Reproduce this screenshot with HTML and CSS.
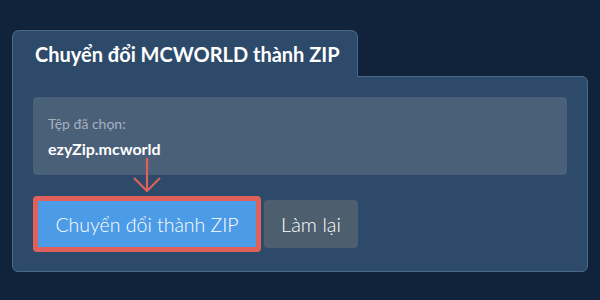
FILE: index.html
```html
<!DOCTYPE html>
<html lang="vi">
  <head>
    <meta charset="UTF-8" />
    <title>Chuyển đổi MCWORLD thành ZIP</title>
    <link rel="stylesheet" href="styles.css">
  </head>
  <body>
    <div class="converter">
      <div class="tab">Chuyển đổi MCWORLD thành ZIP</div>
      <div class="panel">
        <div class="file-box">
          <div class="file-label">Tệp đã chọn:</div>
          <div class="file-name">ezyZip.mcworld</div>
        </div>

        <div class="actions">
          <svg class="pointer" width="30" height="36" viewBox="0 0 30 36">
            <path d="M15 1 V34 M2 21 L15 34 L28 21" fill="none" stroke="#e0605b" stroke-width="2.2" />
          </svg>
          <button class="btn btn-primary">Chuyển đổi thành ZIP</button>
          <button class="btn btn-reset">Làm lại</button>
        </div>
      </div>
    </div>
  </body>
</html>
```

FILE: styles.css
```css
* {
  margin: 0;
  padding: 0;
  box-sizing: border-box;
  font-family: Lato, 'Open Sans', sans-serif;
}

body {
  background-color: #10233a;
  height: 100vh;
  padding: 30px 0 0 12px;
}

.converter {
  width: 576px;
}

.tab {
  position: relative;
  z-index: 1;
  width: 346px;
  height: 47px;
  margin-bottom: -1px;
  padding: 11px 0 0 22px;
  background-color: #2d4a6b;
  border: 1px solid #4a6889;
  border-bottom: none;
  border-radius: 7px 7px 0 0;
  color: #fff;
  font-size: 20px;
  font-weight: bold;
}

.panel {
  background-color: #2d4a6b;
  border: 1px solid #4a6889;
  border-radius: 0 6px 6px 6px;
  padding: 20px 20px 19px 20px;
}

.file-box {
  background-color: #4a6079;
  border-radius: 4px;
  height: 78px;
  padding: 18px 15px;
}

.file-label {
  color: #a6b1bf;
  font-size: 14px;
  margin-bottom: 7px;
}

.file-name {
  color: #fff;
  font-size: 16px;
  font-weight: bold;
}

.actions {
  position: relative;
  display: flex;
  align-items: center;
  gap: 3px;
  margin-top: 21px;
}

.pointer {
  position: absolute;
  left: 99px;
  top: -39px;
}

.btn {
  border: none;
  color: #fff;
  font-size: 20px;
  font-weight: 300;
  border-radius: 4px;
  cursor: pointer;
}

.btn-primary {
  background-color: #4c9be6;
  border: 5px solid #e0605b;
  height: 56px;
  width: 228px;
  font-size: 19.5px;
}

.btn-reset {
  background-color: #4d5e6f;
  height: 48px;
  width: 94px;
}
```
